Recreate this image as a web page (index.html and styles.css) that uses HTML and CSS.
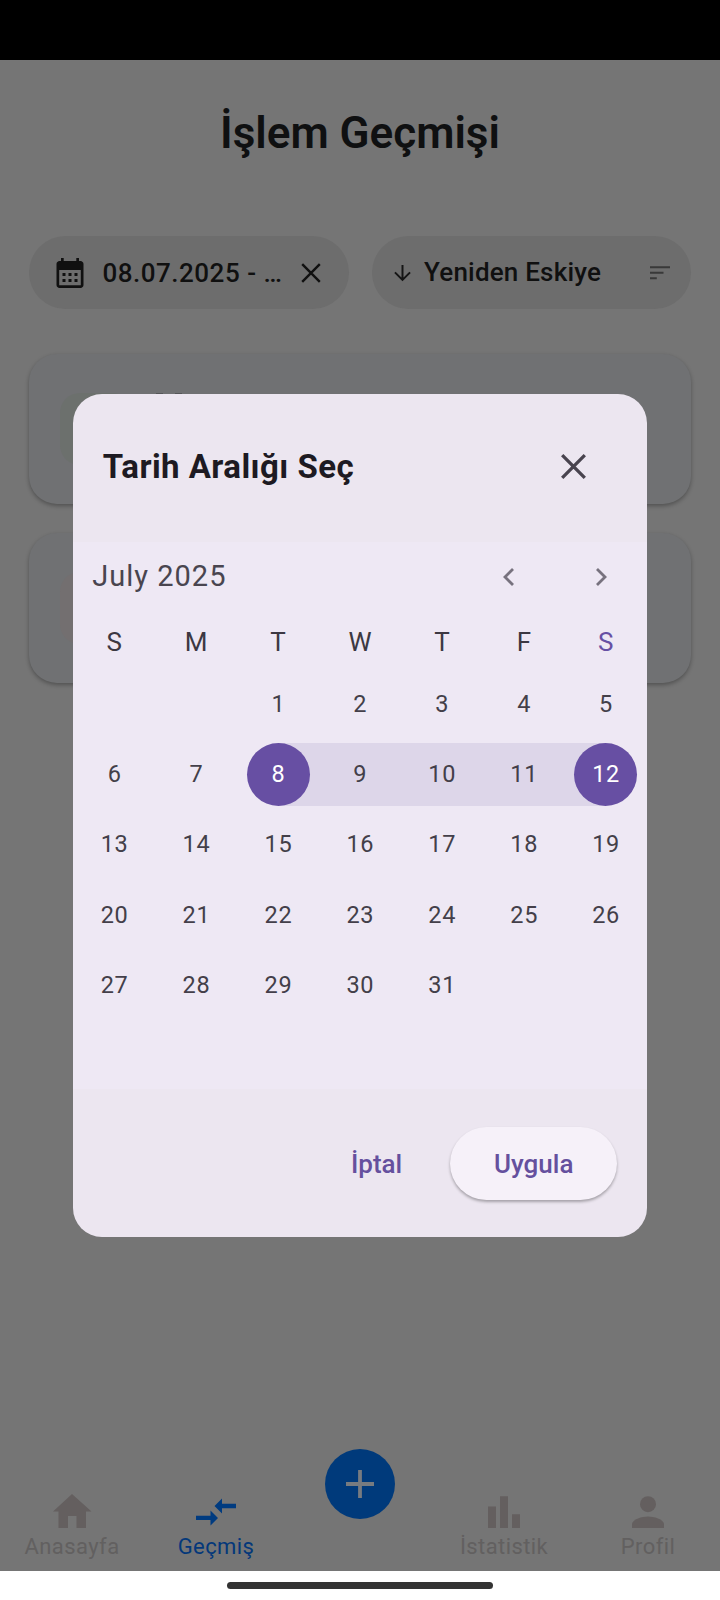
FILE: index.html
```html
<!DOCTYPE html>
<html lang="tr">
<head>
<meta charset="utf-8">
<title>İşlem Geçmişi</title>
<link rel="stylesheet" href="styles.css">
</head>
<body>
<div class="screen">
  <div class="status"></div>
  <header class="top"><h1 class="title">İşlem Geçmişi</h1></header>
  <div class="filters">
    <div class="pill date-pill">
      <svg class="cal-icon" viewBox="0 0 24 24"><path fill="#101010" d="M19 4h-1V2h-1.800v2H7.800V2H6v2H5c-1.100 0-2 .9-2 2v14c0 1.100.9 2 2 2h14c1.100 0 2-.9 2-2V6c0-1.100-.9-2-2-2zm.2 16.200H4.800V10h14.400v10.200zM9 14H7v-2h2v2zm4 0h-2v-2h2v2zm4 0h-2v-2h2v2zm-8 4H7v-2h2v2zm4 0h-2v-2h2v2zm4 0h-2v-2h2v2z"/></svg>
      <span class="pill-text date-text">08.07.2025 - …</span>
      <svg class="clear-icon" viewBox="0 0 20 20"><path d="M1.200 1.200l17.600 17.600M18.800 1.200l-17.600 17.600" stroke="#101010" stroke-width="2.400"/></svg>
    </div>
    <div class="pill sort-pill">
      <svg class="down-icon" viewBox="0 0 18 18"><path d="M9 .5v16M1 8.300l8 8 8-8" fill="none" stroke="#151515" stroke-width="2.100"/></svg>
      <span class="pill-text sort-text">Yeniden Eskiye</span>
      <svg class="sort-icon" viewBox="0 0 20 14"><path d="M0 1.300h20M0 6.800h13.500M0 12.300h6.800" stroke="#393939" stroke-width="1.900"/></svg>
    </div>
  </div>
  <main class="list">
    <div class="card"><div class="badge income"></div><div class="marks"><i></i><i></i></div></div>
    <div class="card"><div class="badge expense"></div></div>
  </main>
  <nav class="nav">
    <div class="tab"><svg class="tab-icon" viewBox="0 0 40 36"><path d="M20 1L1 18.500h5.500V35H16V23h8.500v12H34V18.500h5.500z"/></svg><span>Anasayfa</span></div>
    <div class="tab active"><svg class="tab-icon" viewBox="0 0 40 36"><path d="M18.500 13L26 5.500v5.300h14v4.400H26v5.300zM0 22.700h14.500v-5.300L22 25l-7.500 7.500v-5.400H0z"/></svg><span>Geçmiş</span></div>
    <div class="tab add"><div class="fab"><svg viewBox="0 0 28 28"><path d="M14 0v28M0 14h28" stroke="#777b80" stroke-width="3.800"/></svg></div></div>
    <div class="tab"><svg class="tab-icon" viewBox="0 0 40 36"><path d="M4 13.600h8V35H4zM16 3.200h8V35h-8zM28 21.300h8V35h-8z"/></svg><span>İstatistik</span></div>
    <div class="tab"><svg class="tab-icon" viewBox="0 0 40 36"><circle cx="20" cy="11.200" r="8"/><path d="M4 35v-3.800c0-5 10.600-7.700 16-7.700s16 2.700 16 7.700V35z"/></svg><span class="profile">Profil</span></div>
  </nav>
  <div class="system"><div class="handle"></div></div>

  <section class="dialog">
    <div class="dialog-head">
      <h2 class="dialog-title">Tarih Aralığı Seç</h2>
      <svg class="close" viewBox="0 0 25 25"><path d="M1.200 1.200l22.600 22.600M23.800 1.200L1.200 23.800" stroke="#48434e" stroke-width="3.300"/></svg>
    </div>
    <div class="calendar">
      <div class="month">
        <span class="month-name">July 2025</span>
        <svg class="chev" viewBox="0 0 11 18"><path d="M10 1L2 9l8 8" /></svg>
        <svg class="chev next" viewBox="0 0 11 18"><path d="M1 1l8 8-8 8"/></svg>
      </div>
      <div class="week"><span>S</span><span>M</span><span>T</span><span>W</span><span>T</span><span>F</span><span class="today">S</span></div>
      <div class="days">
        <span></span><span></span><span>1</span><span>2</span><span>3</span><span>4</span><span>5</span>
        <span>6</span><span>7</span><span class="start"><b>8</b></span><span class="range">9</span><span class="range">10</span><span class="range">11</span><span class="end"><b>12</b></span>
        <span>13</span><span>14</span><span>15</span><span>16</span><span>17</span><span>18</span><span>19</span>
        <span>20</span><span>21</span><span>22</span><span>23</span><span>24</span><span>25</span><span>26</span>
        <span>27</span><span>28</span><span>29</span><span>30</span><span>31</span>
      </div>
    </div>
    <div class="actions">
      <span class="cancel">İptal</span>
      <span class="apply">Uygula</span>
    </div>
  </section>
</div>
</body>
</html>
```
FILE: styles.css
```css
* { box-sizing: border-box; }
body { margin: 0; font-family: Roboto, sans-serif; }
svg { display: block; flex: none; }
.screen {
  position: relative;
  width: 720px;
  height: 1600px;
  display: flex;
  flex-direction: column;
  overflow: hidden;
  background: #757575;
}
.status { height: 60px; background: #000; }
.top { height: 176px; padding-top: 45px; text-align: center; }
.title { margin: 0; font-size: 44px; line-height: 56px; font-weight: 600; color: #0f1011; white-space: nowrap; }

.filters { display: grid; grid-template-columns: 1fr 1fr; gap: 23px; padding: 0 29px; }
.pill {
  height: 73px;
  border-radius: 37px;
  background: #6d6d6d;
  display: flex;
  align-items: center;
  white-space: nowrap;
}
.pill-text { font-size: 26px; line-height: 32px; font-weight: 500; color: #101010; }
.date-pill { padding: 0 28px 0 22.500px; }
.sort-pill { padding: 0 21px 0 22px; }
.cal-icon { width: 36px; height: 36px; }
.date-text { margin-left: 15px; letter-spacing: .5px; }
.clear-icon { width: 20px; height: 20px; margin-left: auto; }
.down-icon { width: 17px; height: 18px; }
.sort-text { margin-left: 13.500px; padding-bottom: 2px; letter-spacing: .2px; }
.sort-icon { width: 20px; height: 14px; margin-left: auto; }

.list { flex: 1; padding: 45px 29px 0; display: flex; flex-direction: column; gap: 29px; }
.card {
  display: flex;
  height: 150px;
  padding: 39px 31px;
  border-radius: 28px;
  background: #707173;
  box-shadow: 0 2px 4px rgba(0, 0, 0, .3);
}
.badge { width: 73px; height: 72px; border-radius: 20px; }
.income { background: #6c706d; }
.expense { background: #736f70; }
.marks { display: flex; gap: 12px; padding: 0 0 0 23px; }
.marks i { width: 7px; height: 3px; background: #555658; }

.nav { height: 120px; display: grid; grid-template-columns: repeat(5, 1fr); }
.tab {
  display: flex;
  flex-direction: column;
  align-items: center;
  padding-top: 42px;
  font-size: 22px;
  line-height: 30px;
  letter-spacing: .4px;
  color: #626060;
  fill: #645f5f;
}
.tab-icon { width: 40px; height: 36px; }
.tab span { margin-top: 3px; white-space: nowrap; }
.active { color: #04387a; fill: #003b80; letter-spacing: .4px; }
.add { padding-top: 0; }
.fab {
  width: 70px;
  height: 70px;
  margin-top: -1.500px;
  border-radius: 50%;
  background: #003a7b;
  display: flex;
  align-items: center;
  justify-content: center;
}
.fab svg { width: 28px; height: 28px; }
.system { height: 29.500px; background: #fff; display: flex; justify-content: center; padding-top: 11.500px; }
.handle { width: 266px; height: 7px; border-radius: 4px; background: #333; }

.dialog {
  position: absolute;
  left: 73.300px;
  top: 393.500px;
  width: 573.400px;
  height: 843px;
  border-radius: 29px;
  background: #ece6f0;
  display: flex;
  flex-direction: column;
}
.dialog-head { height: 148.500px; padding: 0 61px 2px 29.500px; display: flex; align-items: center; justify-content: space-between; }
.dialog-title { margin: 0; font-size: 33px; line-height: 40px; font-weight: 700; letter-spacing: .45px; color: #1d1a22; white-space: nowrap; }
.close { width: 25px; height: 25px; }
.calendar { height: 547px; background: #eee8f4; color: #49454f; }
.month { height: 72px; display: flex; align-items: center; padding: 0 40px 2px 19px; }
.month-name { flex: 1; font-size: 29px; letter-spacing: 1px; line-height: 36px; padding-bottom: 2px; }
.chev { width: 11px; height: 18px; fill: none; stroke: #77727e; stroke-width: 2.800; }
.next { margin-left: 82px; }
.week, .days { display: grid; grid-template-columns: repeat(7, 1fr); }
.week { height: 55px; font-size: 26px; line-height: 56.500px; text-align: center; color: #3c3842; }
.today { color: #6750a4; }
.days { grid-auto-rows: 70.200px; font-size: 23.500px; letter-spacing: .7px; color: #433f49; }
.days span { height: 63px; align-self: center; display: flex; align-items: center; justify-content: center; padding-left: .7px; }
.days .start, .days .end { padding-left: 0; }
.days b {
  width: 63px;
  height: 63px;
  padding-left: .7px;
  border-radius: 50%;
  background: #674fa3;
  color: #fff;
  font-weight: 400;
  display: flex;
  align-items: center;
  justify-content: center;
}
.range { background: #ddd6e9; }
.start { background: linear-gradient(to right, transparent 50%, #ddd6e9 50%); }
.end { background: linear-gradient(to right, #ddd6e9 50%, transparent 50%); }
.actions {
  flex: 1;
  display: flex;
  align-items: flex-start;
  justify-content: flex-end;
  gap: 48px;
  padding: 38px 29.500px 0 0;
  font-size: 26px;
  line-height: 74px;
  font-weight: 500;
  color: #65509e;
}
.apply {
  width: 167px;
  height: 73px;
  border-radius: 37px;
  background: #f6f1f9;
  text-align: center;
  box-shadow: 0 2px 3px rgba(0, 0, 0, .3);
}
```
